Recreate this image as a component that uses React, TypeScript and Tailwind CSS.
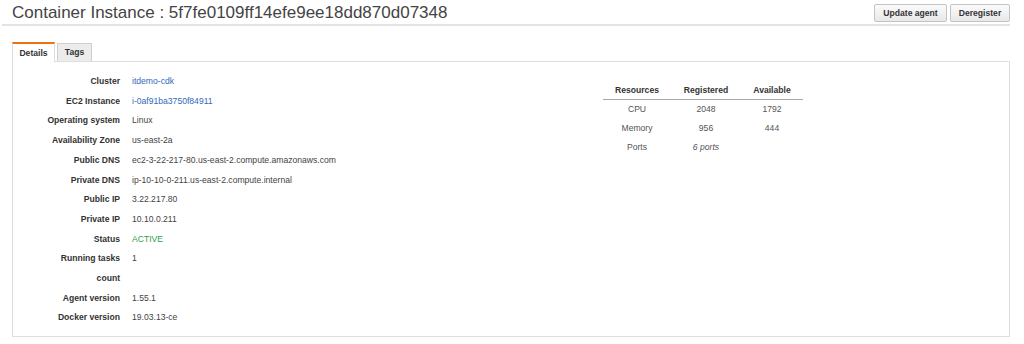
import React from "react";

const rows: { label: string; value: string; kind?: "link" | "green" }[] = [
  { label: "Cluster", value: "itdemo-cdk", kind: "link" },
  { label: "EC2 Instance", value: "i-0af91ba3750f84911", kind: "link" },
  { label: "Operating system", value: "Linux" },
  { label: "Availability Zone", value: "us-east-2a" },
  { label: "Public DNS", value: "ec2-3-22-217-80.us-east-2.compute.amazonaws.com" },
  { label: "Private DNS", value: "ip-10-10-0-211.us-east-2.compute.internal" },
  { label: "Public IP", value: "3.22.217.80" },
  { label: "Private IP", value: "10.10.0.211" },
  { label: "Status", value: "ACTIVE", kind: "green" },
  { label: "Running tasks count", value: "1" },
  { label: "Agent version", value: "1.55.1" },
  { label: "Docker version", value: "19.03.13-ce" },
];

export default function App() {
  return (
    <div className="w-[1024px] h-[344px] bg-white font-['Liberation_Sans',Arial,sans-serif] text-[8.6px] text-[#444] overflow-hidden">
      {/* Header */}
      <div className="ml-[2px] w-[1008px] h-[26px] flex justify-between border-b-2 border-[#e4e4e4] pl-[10px]">
        <h1 className="text-[17px] leading-none text-[#444] font-normal mt-[4px]">
          Container Instance : 5f7fe0109ff14efe9ee18dd870d07348
        </h1>
        <div className="flex gap-[3px] mt-[4px] h-[18px]">
          <button className="w-[73px] h-[18px] rounded-[2px] border border-[#c4c4c4] bg-gradient-to-b from-[#fbfbfb] to-[#e8e8e8] font-bold text-[#333] text-[8.6px]">
            Update agent
          </button>
          <button className="w-[60px] h-[18px] rounded-[2px] border border-[#c4c4c4] bg-gradient-to-b from-[#fbfbfb] to-[#e8e8e8] font-bold text-[#333] text-[8.6px]">
            Deregister
          </button>
        </div>
      </div>

      {/* Tabs + panel */}
      <div className="ml-[12px] w-[998px] mt-[16px]">
        <div className="relative z-10 flex items-end gap-[2px] h-[20px] -mb-px">
          <div className="w-[43px] h-[20px] bg-white border-t-2 border-t-[#ec7211] border-x border-x-[#dcdcdc] flex items-center justify-center font-bold text-[#333]">
            Details
          </div>
          <div className="w-[35px] h-[18px] mb-[1px] bg-[#ececec] border border-b-0 border-[#cfcfcf] flex items-center justify-center font-bold text-[#333]">
            Tags
          </div>
        </div>
        <div className="h-[276px] border border-[#dedede] bg-white flex">
          <div className="w-[590px] pl-[31px] pt-[10px]">
            <div className="grid grid-cols-[76px_1fr] gap-x-[12px] leading-[19.7px]">
              {rows.map((r) => (
                <React.Fragment key={r.label}>
                  <div className="text-right font-bold text-[#333]">{r.label}</div>
                  <div
                    className={
                      r.kind === "link"
                        ? "text-[#3469bd]"
                        : r.kind === "green"
                        ? "text-[#2f9d4a]"
                        : "text-[#444]"
                    }
                  >
                    {r.value}
                  </div>
                </React.Fragment>
              ))}
            </div>
          </div>
          <div className="mt-[19px]">
            <div className="grid grid-cols-[68px_70px_62px] text-center">
              <div className="h-[19px] flex items-center justify-center font-bold text-[#333] border-b border-[#a8a8a8]">Resources</div>
              <div className="h-[19px] flex items-center justify-center font-bold text-[#333] border-b border-[#a8a8a8]">Registered</div>
              <div className="h-[19px] flex items-center justify-center font-bold text-[#333] border-b border-[#a8a8a8]">Available</div>
              <div className="h-[19px] flex items-center justify-center text-[#555]">CPU</div>
              <div className="h-[19px] flex items-center justify-center text-[#555]">2048</div>
              <div className="h-[19px] flex items-center justify-center text-[#555]">1792</div>
              <div className="h-[19px] flex items-center justify-center text-[#555]">Memory</div>
              <div className="h-[19px] flex items-center justify-center text-[#555]">956</div>
              <div className="h-[19px] flex items-center justify-center text-[#555]">444</div>
              <div className="h-[19px] flex items-center justify-center text-[#555]">Ports</div>
              <div className="h-[19px] flex items-center justify-center text-[#555] italic">6 ports</div>
              <div className="h-[19px]"></div>
            </div>
          </div>
        </div>
      </div>
    </div>
  );
}
